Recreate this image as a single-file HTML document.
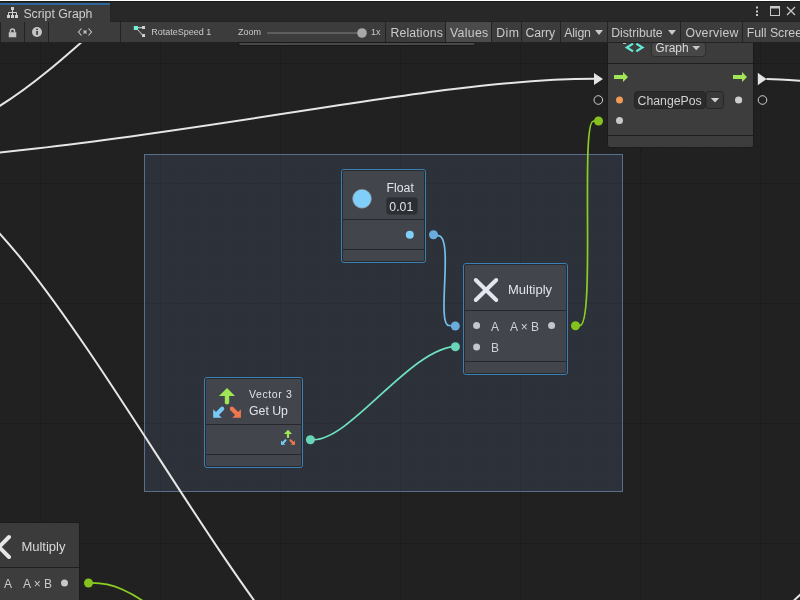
<!DOCTYPE html>
<html><head><meta charset="utf-8">
<style>
*{margin:0;padding:0;box-sizing:border-box}
html,body{width:800px;height:600px;overflow:hidden;background:#212121;font-family:"Liberation Sans", sans-serif;}
.abs{position:absolute}
.t{position:absolute;white-space:pre;color:#d2d2d2;line-height:1}
</style></head><body>
<div class="abs" style="left:0;top:0;width:800px;height:600px;will-change:transform">
<svg class="abs" style="left:0;top:0" width="800" height="600" viewBox="0 0 800 600">
<rect x="0" y="42" width="800" height="558" fill="#212121"/>
<line x1="4.5" y1="42" x2="4.5" y2="600" stroke="#202020" stroke-width="1"/>
<line x1="16.5" y1="42" x2="16.5" y2="600" stroke="#202020" stroke-width="1"/>
<line x1="28.5" y1="42" x2="28.5" y2="600" stroke="#202020" stroke-width="1"/>
<line x1="40.5" y1="42" x2="40.5" y2="600" stroke="#1c1c1c" stroke-width="1"/>
<line x1="52.5" y1="42" x2="52.5" y2="600" stroke="#202020" stroke-width="1"/>
<line x1="64.5" y1="42" x2="64.5" y2="600" stroke="#202020" stroke-width="1"/>
<line x1="76.5" y1="42" x2="76.5" y2="600" stroke="#202020" stroke-width="1"/>
<line x1="88.5" y1="42" x2="88.5" y2="600" stroke="#202020" stroke-width="1"/>
<line x1="100.5" y1="42" x2="100.5" y2="600" stroke="#202020" stroke-width="1"/>
<line x1="112.5" y1="42" x2="112.5" y2="600" stroke="#202020" stroke-width="1"/>
<line x1="124.5" y1="42" x2="124.5" y2="600" stroke="#202020" stroke-width="1"/>
<line x1="136.5" y1="42" x2="136.5" y2="600" stroke="#202020" stroke-width="1"/>
<line x1="148.5" y1="42" x2="148.5" y2="600" stroke="#202020" stroke-width="1"/>
<line x1="160.5" y1="42" x2="160.5" y2="600" stroke="#1c1c1c" stroke-width="1"/>
<line x1="172.5" y1="42" x2="172.5" y2="600" stroke="#202020" stroke-width="1"/>
<line x1="184.5" y1="42" x2="184.5" y2="600" stroke="#202020" stroke-width="1"/>
<line x1="196.5" y1="42" x2="196.5" y2="600" stroke="#202020" stroke-width="1"/>
<line x1="208.5" y1="42" x2="208.5" y2="600" stroke="#202020" stroke-width="1"/>
<line x1="220.5" y1="42" x2="220.5" y2="600" stroke="#202020" stroke-width="1"/>
<line x1="232.5" y1="42" x2="232.5" y2="600" stroke="#202020" stroke-width="1"/>
<line x1="244.5" y1="42" x2="244.5" y2="600" stroke="#202020" stroke-width="1"/>
<line x1="256.5" y1="42" x2="256.5" y2="600" stroke="#202020" stroke-width="1"/>
<line x1="268.5" y1="42" x2="268.5" y2="600" stroke="#202020" stroke-width="1"/>
<line x1="280.5" y1="42" x2="280.5" y2="600" stroke="#1c1c1c" stroke-width="1"/>
<line x1="292.5" y1="42" x2="292.5" y2="600" stroke="#202020" stroke-width="1"/>
<line x1="304.5" y1="42" x2="304.5" y2="600" stroke="#202020" stroke-width="1"/>
<line x1="316.5" y1="42" x2="316.5" y2="600" stroke="#202020" stroke-width="1"/>
<line x1="328.5" y1="42" x2="328.5" y2="600" stroke="#202020" stroke-width="1"/>
<line x1="340.5" y1="42" x2="340.5" y2="600" stroke="#202020" stroke-width="1"/>
<line x1="352.5" y1="42" x2="352.5" y2="600" stroke="#202020" stroke-width="1"/>
<line x1="364.5" y1="42" x2="364.5" y2="600" stroke="#202020" stroke-width="1"/>
<line x1="376.5" y1="42" x2="376.5" y2="600" stroke="#202020" stroke-width="1"/>
<line x1="388.5" y1="42" x2="388.5" y2="600" stroke="#202020" stroke-width="1"/>
<line x1="400.5" y1="42" x2="400.5" y2="600" stroke="#1c1c1c" stroke-width="1"/>
<line x1="412.5" y1="42" x2="412.5" y2="600" stroke="#202020" stroke-width="1"/>
<line x1="424.5" y1="42" x2="424.5" y2="600" stroke="#202020" stroke-width="1"/>
<line x1="436.5" y1="42" x2="436.5" y2="600" stroke="#202020" stroke-width="1"/>
<line x1="448.5" y1="42" x2="448.5" y2="600" stroke="#202020" stroke-width="1"/>
<line x1="460.5" y1="42" x2="460.5" y2="600" stroke="#202020" stroke-width="1"/>
<line x1="472.5" y1="42" x2="472.5" y2="600" stroke="#202020" stroke-width="1"/>
<line x1="484.5" y1="42" x2="484.5" y2="600" stroke="#202020" stroke-width="1"/>
<line x1="496.5" y1="42" x2="496.5" y2="600" stroke="#202020" stroke-width="1"/>
<line x1="508.5" y1="42" x2="508.5" y2="600" stroke="#202020" stroke-width="1"/>
<line x1="520.5" y1="42" x2="520.5" y2="600" stroke="#1c1c1c" stroke-width="1"/>
<line x1="532.5" y1="42" x2="532.5" y2="600" stroke="#202020" stroke-width="1"/>
<line x1="544.5" y1="42" x2="544.5" y2="600" stroke="#202020" stroke-width="1"/>
<line x1="556.5" y1="42" x2="556.5" y2="600" stroke="#202020" stroke-width="1"/>
<line x1="568.5" y1="42" x2="568.5" y2="600" stroke="#202020" stroke-width="1"/>
<line x1="580.5" y1="42" x2="580.5" y2="600" stroke="#202020" stroke-width="1"/>
<line x1="592.5" y1="42" x2="592.5" y2="600" stroke="#202020" stroke-width="1"/>
<line x1="604.5" y1="42" x2="604.5" y2="600" stroke="#202020" stroke-width="1"/>
<line x1="616.5" y1="42" x2="616.5" y2="600" stroke="#202020" stroke-width="1"/>
<line x1="628.5" y1="42" x2="628.5" y2="600" stroke="#202020" stroke-width="1"/>
<line x1="640.5" y1="42" x2="640.5" y2="600" stroke="#1c1c1c" stroke-width="1"/>
<line x1="652.5" y1="42" x2="652.5" y2="600" stroke="#202020" stroke-width="1"/>
<line x1="664.5" y1="42" x2="664.5" y2="600" stroke="#202020" stroke-width="1"/>
<line x1="676.5" y1="42" x2="676.5" y2="600" stroke="#202020" stroke-width="1"/>
<line x1="688.5" y1="42" x2="688.5" y2="600" stroke="#202020" stroke-width="1"/>
<line x1="700.5" y1="42" x2="700.5" y2="600" stroke="#202020" stroke-width="1"/>
<line x1="712.5" y1="42" x2="712.5" y2="600" stroke="#202020" stroke-width="1"/>
<line x1="724.5" y1="42" x2="724.5" y2="600" stroke="#202020" stroke-width="1"/>
<line x1="736.5" y1="42" x2="736.5" y2="600" stroke="#202020" stroke-width="1"/>
<line x1="748.5" y1="42" x2="748.5" y2="600" stroke="#202020" stroke-width="1"/>
<line x1="760.5" y1="42" x2="760.5" y2="600" stroke="#1c1c1c" stroke-width="1"/>
<line x1="772.5" y1="42" x2="772.5" y2="600" stroke="#202020" stroke-width="1"/>
<line x1="784.5" y1="42" x2="784.5" y2="600" stroke="#202020" stroke-width="1"/>
<line x1="796.5" y1="42" x2="796.5" y2="600" stroke="#202020" stroke-width="1"/>
<line x1="0" y1="51.5" x2="800" y2="51.5" stroke="#202020" stroke-width="1"/>
<line x1="0" y1="63.5" x2="800" y2="63.5" stroke="#1c1c1c" stroke-width="1"/>
<line x1="0" y1="75.5" x2="800" y2="75.5" stroke="#202020" stroke-width="1"/>
<line x1="0" y1="87.5" x2="800" y2="87.5" stroke="#202020" stroke-width="1"/>
<line x1="0" y1="99.5" x2="800" y2="99.5" stroke="#202020" stroke-width="1"/>
<line x1="0" y1="111.5" x2="800" y2="111.5" stroke="#202020" stroke-width="1"/>
<line x1="0" y1="123.5" x2="800" y2="123.5" stroke="#202020" stroke-width="1"/>
<line x1="0" y1="135.5" x2="800" y2="135.5" stroke="#202020" stroke-width="1"/>
<line x1="0" y1="147.5" x2="800" y2="147.5" stroke="#202020" stroke-width="1"/>
<line x1="0" y1="159.5" x2="800" y2="159.5" stroke="#202020" stroke-width="1"/>
<line x1="0" y1="171.5" x2="800" y2="171.5" stroke="#202020" stroke-width="1"/>
<line x1="0" y1="183.5" x2="800" y2="183.5" stroke="#1c1c1c" stroke-width="1"/>
<line x1="0" y1="195.5" x2="800" y2="195.5" stroke="#202020" stroke-width="1"/>
<line x1="0" y1="207.5" x2="800" y2="207.5" stroke="#202020" stroke-width="1"/>
<line x1="0" y1="219.5" x2="800" y2="219.5" stroke="#202020" stroke-width="1"/>
<line x1="0" y1="231.5" x2="800" y2="231.5" stroke="#202020" stroke-width="1"/>
<line x1="0" y1="243.5" x2="800" y2="243.5" stroke="#202020" stroke-width="1"/>
<line x1="0" y1="255.5" x2="800" y2="255.5" stroke="#202020" stroke-width="1"/>
<line x1="0" y1="267.5" x2="800" y2="267.5" stroke="#202020" stroke-width="1"/>
<line x1="0" y1="279.5" x2="800" y2="279.5" stroke="#202020" stroke-width="1"/>
<line x1="0" y1="291.5" x2="800" y2="291.5" stroke="#202020" stroke-width="1"/>
<line x1="0" y1="303.5" x2="800" y2="303.5" stroke="#1c1c1c" stroke-width="1"/>
<line x1="0" y1="315.5" x2="800" y2="315.5" stroke="#202020" stroke-width="1"/>
<line x1="0" y1="327.5" x2="800" y2="327.5" stroke="#202020" stroke-width="1"/>
<line x1="0" y1="339.5" x2="800" y2="339.5" stroke="#202020" stroke-width="1"/>
<line x1="0" y1="351.5" x2="800" y2="351.5" stroke="#202020" stroke-width="1"/>
<line x1="0" y1="363.5" x2="800" y2="363.5" stroke="#202020" stroke-width="1"/>
<line x1="0" y1="375.5" x2="800" y2="375.5" stroke="#202020" stroke-width="1"/>
<line x1="0" y1="387.5" x2="800" y2="387.5" stroke="#202020" stroke-width="1"/>
<line x1="0" y1="399.5" x2="800" y2="399.5" stroke="#202020" stroke-width="1"/>
<line x1="0" y1="411.5" x2="800" y2="411.5" stroke="#202020" stroke-width="1"/>
<line x1="0" y1="423.5" x2="800" y2="423.5" stroke="#1c1c1c" stroke-width="1"/>
<line x1="0" y1="435.5" x2="800" y2="435.5" stroke="#202020" stroke-width="1"/>
<line x1="0" y1="447.5" x2="800" y2="447.5" stroke="#202020" stroke-width="1"/>
<line x1="0" y1="459.5" x2="800" y2="459.5" stroke="#202020" stroke-width="1"/>
<line x1="0" y1="471.5" x2="800" y2="471.5" stroke="#202020" stroke-width="1"/>
<line x1="0" y1="483.5" x2="800" y2="483.5" stroke="#202020" stroke-width="1"/>
<line x1="0" y1="495.5" x2="800" y2="495.5" stroke="#202020" stroke-width="1"/>
<line x1="0" y1="507.5" x2="800" y2="507.5" stroke="#202020" stroke-width="1"/>
<line x1="0" y1="519.5" x2="800" y2="519.5" stroke="#202020" stroke-width="1"/>
<line x1="0" y1="531.5" x2="800" y2="531.5" stroke="#202020" stroke-width="1"/>
<line x1="0" y1="543.5" x2="800" y2="543.5" stroke="#1c1c1c" stroke-width="1"/>
<line x1="0" y1="555.5" x2="800" y2="555.5" stroke="#202020" stroke-width="1"/>
<line x1="0" y1="567.5" x2="800" y2="567.5" stroke="#202020" stroke-width="1"/>
<line x1="0" y1="579.5" x2="800" y2="579.5" stroke="#202020" stroke-width="1"/>
<line x1="0" y1="591.5" x2="800" y2="591.5" stroke="#202020" stroke-width="1"/>
<!-- group -->
<rect x="144.5" y="154.5" width="478" height="337" fill="rgba(74,86,112,0.3)" stroke="#5a6e8c" stroke-width="1"/>
<!-- white curves -->
<path d="M-111.70,141.40 C39.52,141.40 131.28,-54.96 241.65,-54.96" fill="none" stroke="#e6e6e6" stroke-width="2"/>
<path d="M-239.06,165.42 C96.98,165.42 396.58,78.75 594,78.75" fill="none" stroke="#e6e6e6" stroke-width="2"/>
<path d="M-90.65,173.87 C39.77,173.87 270.72,729.22 396.46,729.22" fill="none" stroke="#e6e6e6" stroke-width="2"/>
<path d="M766.5,79 C782,79 795,80.3 830,83.5" fill="none" stroke="#e6e6e6" stroke-width="2"/>
<polygon points="594,73 603,79 594,85" fill="#e4e4e4"/>
<path d="M793.5,601 C796,598.5 798,596.5 801,594" fill="none" stroke="#e6e6e6" stroke-width="2"/>
<polygon points="757.8,72.8 766.6,79 757.8,85.2" fill="#e4e4e4"/>
<circle cx="598.3" cy="100" r="4.3" fill="none" stroke="#d0d0d0" stroke-width="1"/>
<circle cx="762.5" cy="100" r="4.3" fill="none" stroke="#d0d0d0" stroke-width="1"/>
<!-- colored curves -->
<path d="M433.5,234.8 L438.03,235.72 C454.5,235.72 435.9,325.51 449,325.51 L455.3,326" fill="none" stroke="#74bdec" stroke-width="1.7"/>
<circle cx="433.5" cy="234.8" r="4.5" fill="#68addd"/>
<circle cx="455.3" cy="326" r="4.5" fill="#68addd"/>
<path d="M310.4,439.8 L314.05,439.65 C351.09,439.65 412,346.36 457.14,346.36" fill="none" stroke="#6ee2bf" stroke-width="1.7"/>
<circle cx="310.4" cy="439.8" r="4.5" fill="#68d6b6"/>
<circle cx="455.4" cy="346.8" r="4.5" fill="#68d6b6"/>
<path d="M575.5,325.75 L579.78,325.53 C595.59,325.53 580.09,121.21 593.41,121.21 L598.5,121" fill="none" stroke="#8cce22" stroke-width="1.7"/>
<circle cx="575.5" cy="325.75" r="4.5" fill="#86c21e"/>
<circle cx="598.5" cy="121" r="4.5" fill="#86c21e"/>
<path d="M88.5,583 C99.2,583 128.9,579.3 182.4,635.5" fill="none" stroke="#8cce22" stroke-width="1.8"/>
<circle cx="88.5" cy="583" r="4.5" fill="#86c21e"/>
</svg>
<div class="abs" style="left:341px;top:169px;width:85px;height:94px;background:#42454c;border:1px solid #3b80b2;border-radius:3px;overflow:hidden">
<div class="abs" style="left:0;top:0;right:0;height:49px;background:#42454c"></div>
<div class="abs" style="left:0;top:49px;right:0;height:1px;background:#25282d"></div>
<div class="abs" style="left:0;top:79px;right:0;height:1px;background:#25282d"></div>

<div class="abs" style="left:0;top:0;right:0;bottom:0;border:1px solid #272a30;border-radius:2px"></div>
</div><div class="abs" style="left:463px;top:263px;width:105px;height:112px;background:#42454c;border:1px solid #3b80b2;border-radius:3px;overflow:hidden">
<div class="abs" style="left:0;top:0;right:0;height:46px;background:#42454c"></div>
<div class="abs" style="left:0;top:46px;right:0;height:1px;background:#25282d"></div>
<div class="abs" style="left:0;top:97px;right:0;height:1px;background:#25282d"></div>

<div class="abs" style="left:0;top:0;right:0;bottom:0;border:1px solid #272a30;border-radius:2px"></div>
</div><div class="abs" style="left:204px;top:377px;width:99px;height:91px;background:#42454c;border:1px solid #3b80b2;border-radius:3px;overflow:hidden">
<div class="abs" style="left:0;top:0;right:0;height:46px;background:#42454c"></div>
<div class="abs" style="left:0;top:46px;right:0;height:1px;background:#25282d"></div>
<div class="abs" style="left:0;top:76px;right:0;height:1px;background:#25282d"></div>

<div class="abs" style="left:0;top:0;right:0;bottom:0;border:1px solid #272a30;border-radius:2px"></div>
</div><div class="abs" style="left:607px;top:20px;width:147px;height:128px;background:#3d3d3d;border:1px solid #1b1b1b;border-radius:3px;overflow:hidden">
<div class="abs" style="left:0;top:0;right:0;height:42px;background:#3c3c3c"></div>
<div class="abs" style="left:0;top:42px;right:0;height:1px;background:#1f1f1f"></div>
<div class="abs" style="left:0;top:114px;right:0;height:1px;background:#1f1f1f"></div>

<div class="abs" style="left:0;top:0;right:0;bottom:0;border:1px solid transparent;border-radius:2px"></div>
</div><div class="abs" style="left:-10px;top:522px;width:90px;height:100px;background:#3d3d3d;border:1px solid #1b1b1b;border-radius:3px;overflow:hidden">
<div class="abs" style="left:0;top:0;right:0;height:44px;background:#3b3b3b"></div>
<div class="abs" style="left:0;top:44px;right:0;height:1px;background:#1f1f1f"></div>
<div class="abs" style="left:0;top:200px;right:0;height:1px;background:#1f1f1f"></div>

<div class="abs" style="left:0;top:0;right:0;bottom:0;border:1px solid transparent;border-radius:2px"></div>
</div><svg class="abs" style="left:0;top:0" width="800" height="600" viewBox="0 0 800 600">
<circle cx="362" cy="198.7" r="9.5" fill="#80cffa" stroke="#8a7a70" stroke-width="0.6"/>
<circle cx="409.8" cy="234.7" r="4" fill="#80cffa"/>
<rect x="386.5" y="197.5" width="31" height="17" rx="3" fill="#2b2e33" stroke="#34373d" stroke-width="1"/>
<path d="M475.8,280 L496.2,300 M496.2,280 L475.8,300" stroke="#e3e6ee" stroke-width="4" stroke-linecap="round"/>
<circle cx="476.6" cy="325.6" r="3.5" fill="#c4c6cb"/>
<circle cx="476.6" cy="347" r="3.5" fill="#c4c6cb"/>
<circle cx="551.6" cy="325.6" r="3.5" fill="#c4c6cb"/>
<path d="M9,537 L-11,557 M9,557 L-11,537" stroke="#e6e6e6" stroke-width="4" stroke-linecap="round"/>
<circle cx="64.5" cy="583" r="3.5" fill="#c8c8c8"/>
<path d="M614,75 h9 v-3 l5,5 l-5,5 v-3 h-9 z" fill="#a0e656"/>
<path d="M733,75 h9 v-3 l5,5 l-5,5 v-3 h-9 z" fill="#a0e656"/>
<circle cx="619.5" cy="100" r="3.5" fill="#f39a55"/>
<circle cx="738.6" cy="100" r="3.6" fill="#cdcdcd"/>
<circle cx="619.5" cy="120.5" r="3.5" fill="#c8c8c8"/>
<rect x="634.5" y="91.5" width="71" height="17" rx="3" fill="#2b2b2b" stroke="#252525"/>
<rect x="706" y="91.5" width="17.5" height="17" rx="3" fill="#393939" stroke="#262626"/>
<polygon points="710.8,98 719.2,98 715,102.5" fill="#cfcfcf"/>
<rect x="651.5" y="42.5" width="54" height="14" rx="3" fill="#474747" stroke="#2e2e2e"/>
<polygon points="692.3,46 700.2,46 696.25,50.3" fill="#c8c8c8"/>
<path d="M633,43.6 L626.9,47.5 L633,51.4 M636.3,43.6 L642.4,47.5 L636.3,51.4" fill="none" stroke="#62ead6" stroke-width="2.3"/><rect x="623" y="43" width="3" height="1" fill="#bbbbbb"/>
<g>
<polygon points="219,396 227,388 235,396" fill="#a0e656"/>
<line x1="227" y1="395" x2="227" y2="402.2" stroke="#a0e656" stroke-width="4.4" stroke-linecap="round"/>
<polygon points="213.2,409.3 213.2,417.7 221.8,417.7" fill="#78cbf8"/>
<line x1="216" y1="415" x2="222.2" y2="408.8" stroke="#78cbf8" stroke-width="4.2" stroke-linecap="round"/>
<polygon points="240.9,409.3 240.9,417.7 232.3,417.7" fill="#f07850"/>
<line x1="238.1" y1="415" x2="231.9" y2="408.8" stroke="#f07850" stroke-width="4.2" stroke-linecap="round"/>
</g>
<g transform="translate(173.34,233.91) scale(0.505)">
<polygon points="219,396 227,388 235,396" fill="#a0e656"/>
<line x1="227" y1="395" x2="227" y2="402.2" stroke="#a0e656" stroke-width="4.4" stroke-linecap="round"/>
<polygon points="213.2,409.3 213.2,417.7 221.8,417.7" fill="#78cbf8"/>
<line x1="216" y1="415" x2="222.2" y2="408.8" stroke="#78cbf8" stroke-width="4.2" stroke-linecap="round"/>
<polygon points="240.9,409.3 240.9,417.7 232.3,417.7" fill="#f07850"/>
<line x1="238.1" y1="415" x2="231.9" y2="408.8" stroke="#f07850" stroke-width="4.2" stroke-linecap="round"/>
</g>
</svg>
<div class="t" style="left:386.5px;top:181.5px;font-size:12.3px;color:#e2e4ea;">Float</div>
<div class="t" style="left:389.3px;top:201px;font-size:12.3px;color:#e0e2e8;">0.01</div>
<div class="t" style="left:508px;top:282.6px;font-size:13px;color:#e2e4ea;">Multiply</div>
<div class="t" style="left:491px;top:320.6px;font-size:12px;color:#cdd0d6;">A</div>
<div class="t" style="left:510px;top:320.6px;font-size:12px;color:#cdd0d6;">A × B</div>
<div class="t" style="left:491px;top:342px;font-size:12px;color:#cdd0d6;">B</div>
<div class="t" style="left:249px;top:389.3px;font-size:10.5px;color:#dfe1e7;letter-spacing:0.6px">Vector 3</div>
<div class="t" style="left:249px;top:404.5px;font-size:12.3px;color:#e2e4ea;">Get Up</div>
<div class="t" style="left:21.4px;top:540px;font-size:13px;color:#d8d8d8;">Multiply</div>
<div class="t" style="left:4px;top:578px;font-size:12px;color:#c8c8c8;">A</div>
<div class="t" style="left:23px;top:578px;font-size:12px;color:#c8c8c8;">A × B</div>
<div class="t" style="left:637.5px;top:95.2px;font-size:12.3px;color:#d0d0d0;">ChangePos</div>
<div class="t" style="left:655.3px;top:41.8px;font-size:12px;color:#d8d8d8;">Graph</div>
<div class="abs" style="left:0;top:0;width:800px;height:1px;background:#ffffff"></div>
<div class="abs" style="left:0;top:1px;width:800px;height:1px;background:#191919"></div>
<div class="abs" style="left:0;top:2px;width:800px;height:19px;background:#282828"></div>
<div class="abs" style="left:0;top:3px;width:110px;height:19px;background:#3c3c3c"></div>
<div class="abs" style="left:0;top:3px;width:110px;height:2px;background:#2f679c"></div>
<div class="abs" style="left:110px;top:21px;width:690px;height:1px;background:#232323"></div>
<div class="abs" style="left:110px;top:2px;width:1px;height:19px;background:#252525"></div>
<div class="abs" style="left:0;top:22px;width:800px;height:20px;background:#3c3c3c"></div>
<div class="abs" style="left:0;top:42px;width:800px;height:1px;background:#232323"></div>
<div class="abs" style="left:238px;top:42px;width:238px;height:4px;background:#1a1a1a;border-radius:0 0 3px 3px"></div>
<div class="abs" style="left:239px;top:43px;width:236px;height:2px;background:#484848;border-radius:0 0 2px 2px"></div>
<div class="abs" style="left:446px;top:22px;width:45px;height:20px;background:#4b4b4b"></div>
<div class="abs" style="left:0px;top:22px;width:1px;height:20px;background:#232323"></div>
<div class="abs" style="left:24px;top:22px;width:1px;height:20px;background:#232323"></div>
<div class="abs" style="left:48px;top:22px;width:1px;height:20px;background:#232323"></div>
<div class="abs" style="left:120px;top:22px;width:1px;height:20px;background:#232323"></div>
<div class="abs" style="left:385px;top:22px;width:1px;height:20px;background:#232323"></div>
<div class="abs" style="left:445px;top:22px;width:1px;height:20px;background:#232323"></div>
<div class="abs" style="left:491px;top:22px;width:1px;height:20px;background:#232323"></div>
<div class="abs" style="left:521px;top:22px;width:1px;height:20px;background:#232323"></div>
<div class="abs" style="left:560px;top:22px;width:1px;height:20px;background:#232323"></div>
<div class="abs" style="left:607px;top:22px;width:1px;height:20px;background:#232323"></div>
<div class="abs" style="left:680px;top:22px;width:1px;height:20px;background:#232323"></div>
<div class="abs" style="left:742px;top:22px;width:1px;height:20px;background:#232323"></div>
<div class="t" style="left:23.4px;top:8px;font-size:12.3px;color:#cfcfcf;">Script Graph</div>
<div class="t" style="left:151.25px;top:27.5px;font-size:9px;color:#cacaca;">RotateSpeed 1</div>
<div class="t" style="left:238px;top:27.5px;font-size:9px;color:#cacaca;">Zoom</div>
<div class="t" style="left:371px;top:27.5px;font-size:9px;color:#cacaca;">1x</div>
<div class="t" style="left:390.4px;top:26.5px;font-size:12.3px;color:#cacaca;letter-spacing:0.15px">Relations</div>
<div class="t" style="left:450px;top:26.5px;font-size:12.3px;color:#cacaca;letter-spacing:0.3px">Values</div>
<div class="t" style="left:496.3px;top:26.5px;font-size:12.3px;color:#cacaca;letter-spacing:0.4px">Dim</div>
<div class="t" style="left:525.5px;top:26.5px;font-size:12.3px;color:#cacaca;letter-spacing:-0.1px">Carry</div>
<div class="t" style="left:564.2px;top:26.5px;font-size:12.3px;color:#cacaca;letter-spacing:-0.15px">Align</div>
<div class="t" style="left:611.3px;top:26.5px;font-size:12.3px;color:#cacaca;letter-spacing:-0.07px">Distribute</div>
<div class="t" style="left:685.4px;top:26.5px;font-size:12.3px;color:#cacaca;letter-spacing:0.25px">Overview</div>
<div class="t" style="left:746.7px;top:26.5px;font-size:12.3px;color:#cacaca;letter-spacing:0px">Full Screen</div>
<svg class="abs" style="left:0;top:0" width="800" height="42" viewBox="0 0 800 42">
<g fill="#d0d0d0"><rect x="11" y="7" width="3" height="3"/><rect x="7" y="15" width="3" height="3"/><rect x="11" y="15" width="3" height="3"/><rect x="15" y="15" width="3" height="3"/><path d="M12.5,9.5 v5.5 M8.5,12.5 h8 M8.5,12.5 v2.5 M16.5,12.5 v2.5" stroke="#d0d0d0" stroke-width="1" fill="none"/></g>
<path d="M10.5,32.5 v-1.5 a2,2 0 0 1 4,0 v1.5" fill="none" stroke="#c4c4c4" stroke-width="1.5"/><rect x="8.75" y="32.25" width="7.5" height="5" fill="#c4c4c4"/>
<circle cx="37" cy="32" r="5" fill="#c4c4c4"/><rect x="36.25" y="31" width="1.6" height="3.8" fill="#303030"/><rect x="36.25" y="28.75" width="1.6" height="1.3" fill="#303030"/>
<path d="M81.5,28.5 L78.5,32 L81.5,35.5 M88.5,28.5 L91.5,32 L88.5,35.5 M83.5,30.5 L86.5,33.5 M86.5,30.5 L83.5,33.5" fill="none" stroke="#c8c8c8" stroke-width="1.1"/>
<rect x="133.8" y="26" width="4.2" height="4" fill="#6ff0d8"/><rect x="142" y="26" width="3" height="3" fill="#d0d0d0"/><rect x="142" y="34" width="3" height="3" fill="#d0d0d0"/><path d="M138,27.6 h4 M137.5,29.5 l5,5.5" stroke="#bdbdbd" stroke-width="1.1" fill="none"/>
<rect x="267" y="32" width="95" height="2" rx="1" fill="#5e5e5e"/><circle cx="362" cy="33" r="4.8" fill="#a8a8a8"/>
<polygon points="595,30 603,30 599,35" fill="#c8c8c8"/><polygon points="668,30 676,30 672,35" fill="#c8c8c8"/>
<g fill="#c8c8c8"><rect x="756" y="6.5" width="2" height="2"/><rect x="756" y="10.5" width="2" height="2"/><rect x="756" y="14" width="2" height="2"/></g>
<rect x="770.5" y="6.5" width="9" height="9" fill="none" stroke="#c8c8c8" stroke-width="1"/><rect x="770.5" y="6.5" width="9" height="2" fill="#c8c8c8"/>
<path d="M787,7 l8,8 M795,7 l-8,8" stroke="#c8c8c8" stroke-width="1.3"/>
</svg>
</div></body></html>
